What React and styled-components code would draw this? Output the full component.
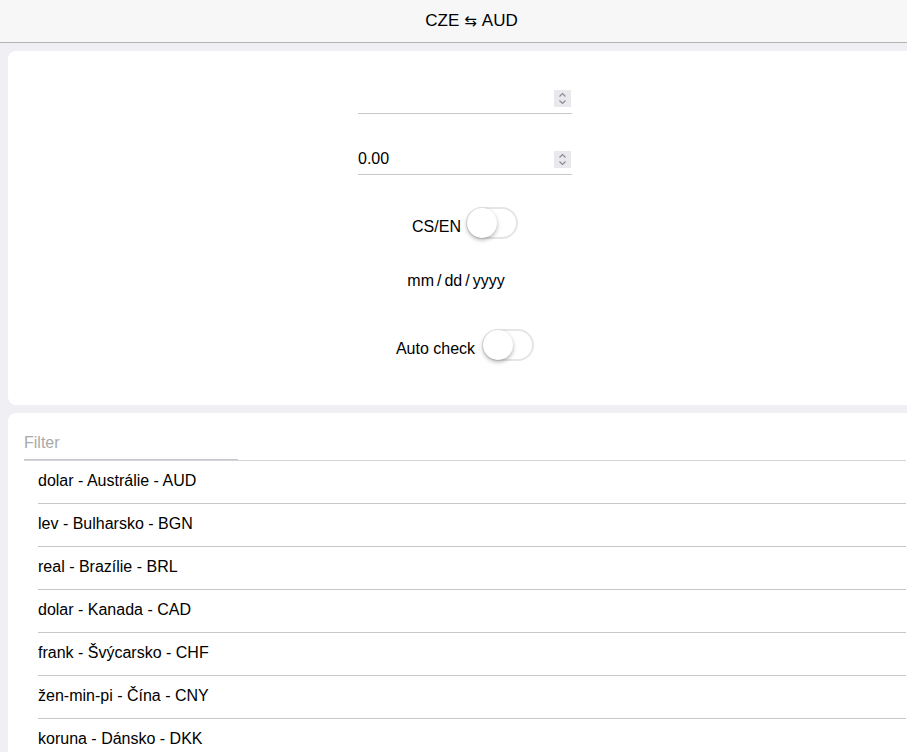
import React from "react";
import styled, { createGlobalStyle } from "styled-components";

const Global = createGlobalStyle`
  html, body { margin: 0; padding: 0; background: #efeff4; }
  body { font-family: "Liberation Sans", Arial, sans-serif; color: #000; overflow: hidden; }
  * { box-sizing: border-box; }
`;

const Page = styled.div`
  width: 907px;
  height: 752px;
  overflow: hidden;
  background: #efeff4;
`;

const NavBar = styled.header`
  height: 43px;
  padding-left: 36px;
  background: #f7f7f8;
  border-bottom: 1px solid #b4b4b6;
  display: flex;
  align-items: center;
  justify-content: center;
  font-size: 17px;
  line-height: 40px;
  color: #000;
`;

const Arrow = styled.span`
  margin: 0 5px;
  font-size: 15px;
  font-family: "DejaVu Sans", sans-serif;
`;

const Content = styled.main`
  padding: 8px 0 0 8px;
  display: flex;
  flex-direction: column;
  gap: 8px;
`;

const Card = styled.section`
  width: 914px;
  background: #fff;
  border-radius: 8px;
  padding: ${(p) => p.$pad};
  display: flex;
  flex-direction: column;
  align-items: ${(p) => (p.$center ? "center" : "stretch")};
`;

const Field = styled.div`
  width: 214px;
  height: 31px;
  border-bottom: 1px solid #c8c7cc;
  display: flex;
  align-items: center;
  margin-top: ${(p) => p.$mt || 0}px;
`;

const Input = styled.input`
  flex: 1;
  min-width: 0;
  border: none;
  outline: none;
  background: transparent;
  padding: 0;
  font: 16px "Liberation Sans", Arial, sans-serif;
  color: #000;
  &::placeholder { color: #a9a9a9; }
`;

const Spinner = styled.div`
  width: 17px;
  height: 17px;
  margin-right: 1px;
  background: #e9e9ed;
  display: flex;
  align-items: center;
  justify-content: center;
`;

const ToggleRow = styled.div`
  display: flex;
  align-items: center;
  gap: ${(p) => p.$gap || 5}px;
  margin-top: ${(p) => p.$mt}px;
  font-size: 16px;
`;

const ToggleLabel = styled.span`
  margin-top: 8px;
`;

const Track = styled.div`
  position: relative;
  width: 52px;
  height: 32px;
  border-radius: 16px;
  border: 2px solid #e5e5e5;
  background: #fff;
`;

const Knob = styled.div`
  position: absolute;
  left: -1px;
  top: -1px;
  width: 30px;
  height: 30px;
  border-radius: 50%;
  background: #fff;
  box-shadow: 0 2px 4px rgba(0, 0, 0, 0.3);
`;

const DateText = styled.div`
  margin-top: 33px;
  padding-right: 18px;
  font-size: 16px;
  line-height: 18px;
  display: flex;
  color: #000;
`;

const Sep = styled.span`
  margin: 0 3px;
`;

const FilterInput = styled.input`
  width: 214px;
  height: 31px;
  border: none;
  border-bottom: 1px solid #c8c7cc;
  outline: none;
  padding: 0 0 2px;
  font: 16px "Liberation Sans", Arial, sans-serif;
  &::placeholder { color: #a9a9a9; }
`;

const List = styled.ul`
  list-style: none;
  margin: 0;
  padding: 0;
  width: 882px;
  border-top: 1px solid #d4d4d8;
`;

const Item = styled.li`
  padding-left: 14px;
`;

const ItemInner = styled.div`
  height: 43px;
  padding-bottom: 2px;
  display: flex;
  align-items: center;
  font-size: 16px;
  border-bottom: 1px solid #c8c7cc;
`;

const Toggle = () => (
  <Track>
    <Knob />
  </Track>
);

const SpinIcon = () => (
  <Spinner>
    <svg width="9" height="13" viewBox="0 0 9 13" fill="none" stroke="#8a8a90" strokeWidth="1.2">
      <path d="M1.5 4.5 L4.5 1.5 L7.5 4.5" />
      <path d="M1.5 8.5 L4.5 11.5 L7.5 8.5" />
    </svg>
  </Spinner>
);

const currencies = [
  "dolar - Austrálie - AUD",
  "lev - Bulharsko - BGN",
  "real - Brazílie - BRL",
  "dolar - Kanada - CAD",
  "frank - Švýcarsko - CHF",
  "žen-min-pi - Čína - CNY",
  "koruna - Dánsko - DKK",
  "euro - EMU - EUR",
];

export default function App() {
  return (
    <Page>
      <Global />
      <NavBar>
        CZE<Arrow>⇆</Arrow>AUD
      </NavBar>
      <Content>
        <Card $pad="32px 0 44px" $center>
          <Field>
            <Input type="text" />
            <SpinIcon />
          </Field>
          <Field $mt={30}>
            <Input type="text" defaultValue="0.00" />
            <SpinIcon />
          </Field>
          <ToggleRow $mt={32}>
            <ToggleLabel>CS/EN</ToggleLabel>
            <Toggle />
          </ToggleRow>
          <DateText>
            <span>mm</span>
            <Sep>/</Sep>
            <span>dd</span>
            <Sep>/</Sep>
            <span>yyyy</span>
          </DateText>
          <ToggleRow $mt={39} $gap={7}>
            <ToggleLabel>Auto check</ToggleLabel>
            <Toggle />
          </ToggleRow>
        </Card>
        <Card $pad="16px 16px 0">
          <FilterInput placeholder="Filter" />
          <List>
            {currencies.map((c) => (
              <Item key={c}>
                <ItemInner>{c}</ItemInner>
              </Item>
            ))}
          </List>
        </Card>
      </Content>
    </Page>
  );
}
